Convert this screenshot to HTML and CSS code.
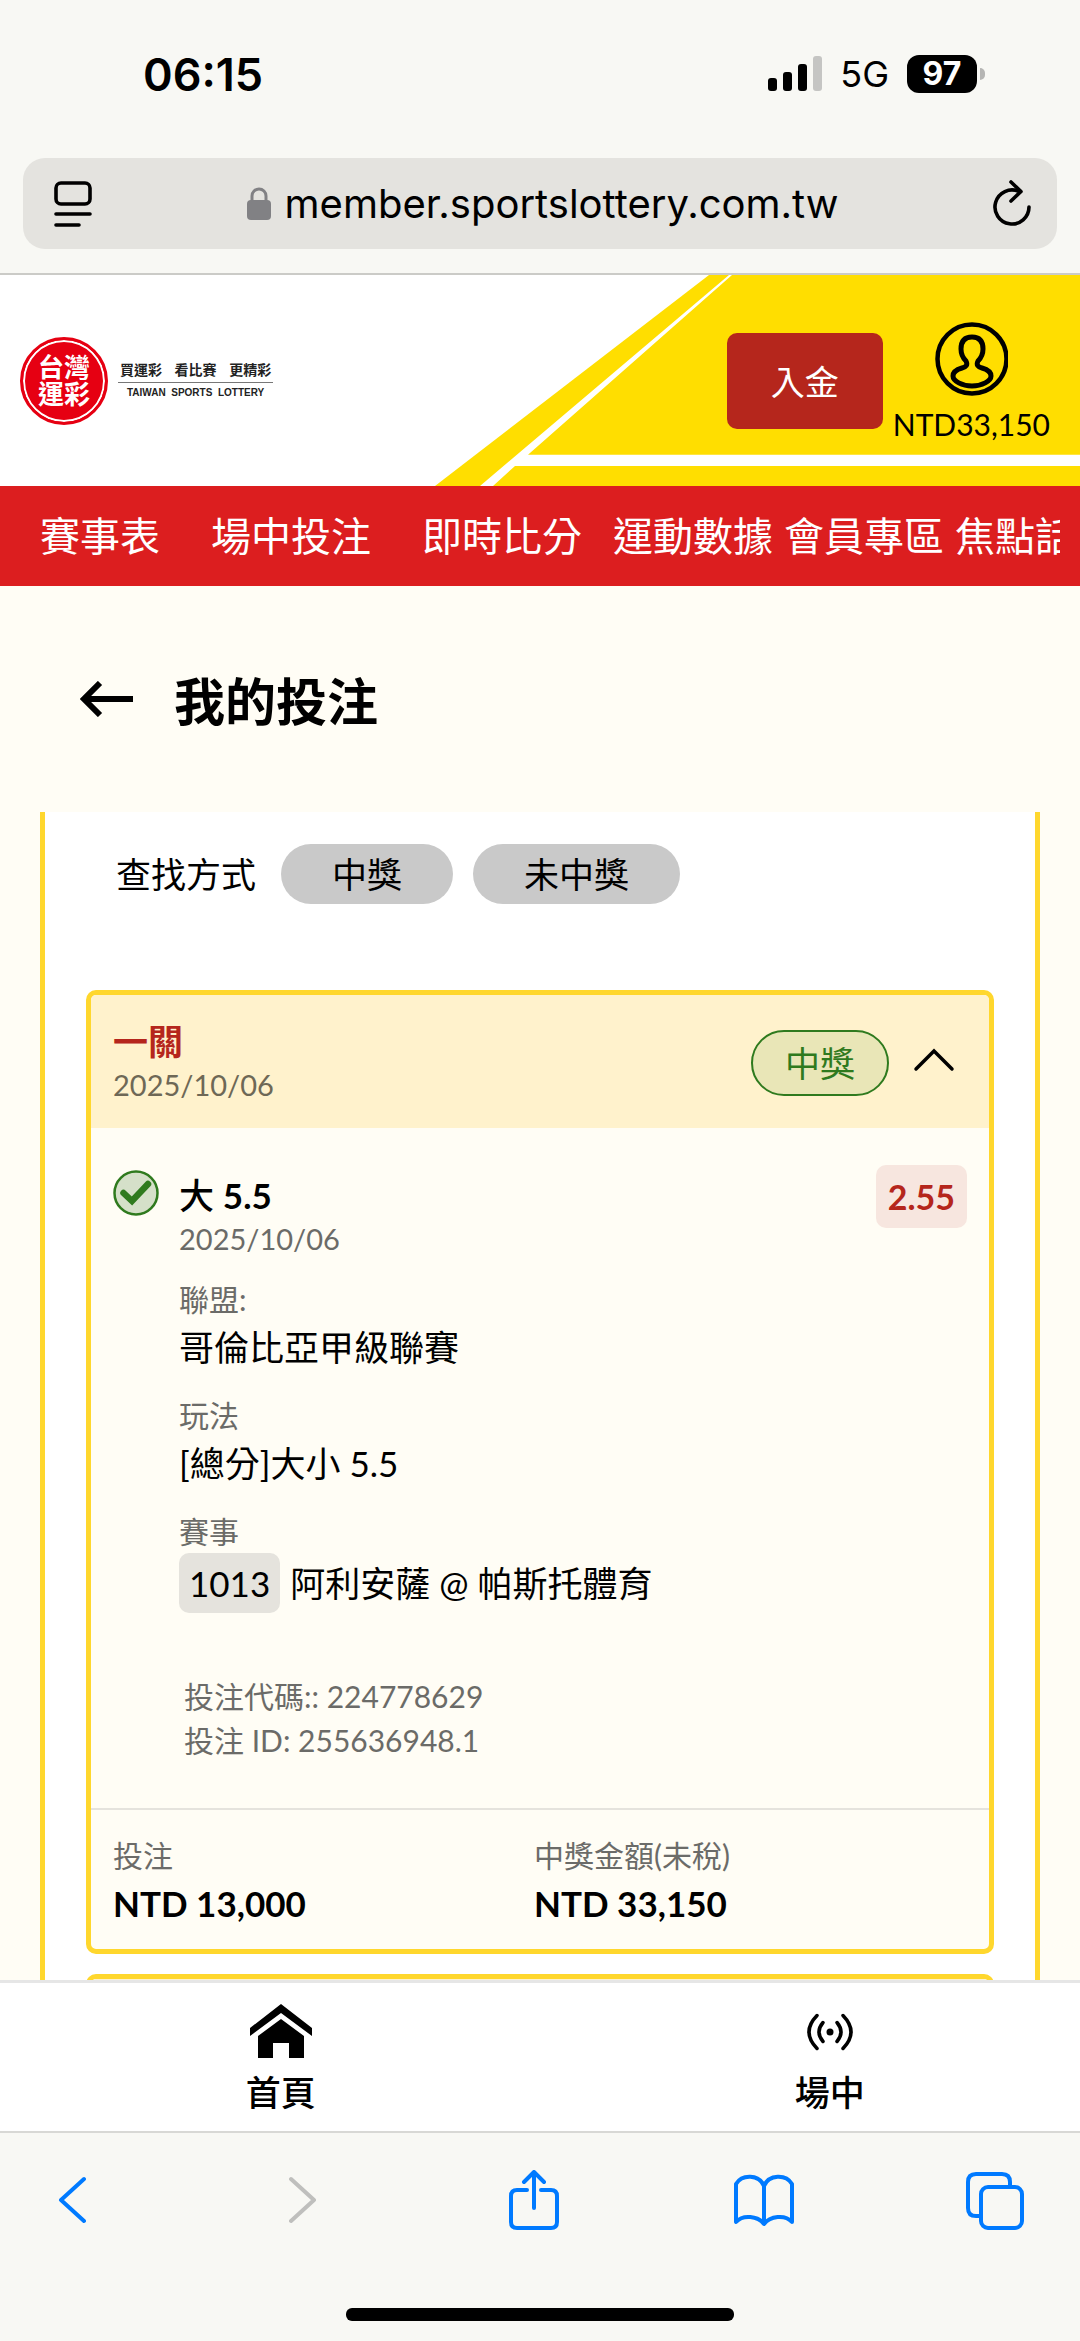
FILE: index.html
```html
<!DOCTYPE html>
<html lang="zh-Hant">
<head>
<meta charset="utf-8">
<meta name="viewport" content="width=device-width, initial-scale=1">
<title>我的投注 - 台灣運彩</title>
<link rel="stylesheet" href="styles.css">
</head>
<body>
<div class="app">
  <div class="browser-top">
    <div class="status">
      <span class="clock">06:15</span>
      <div class="signals">
        <svg width="54" height="36" viewBox="0 0 54 36" aria-hidden="true"><rect x="0" y="22" width="9" height="13" rx="3"/><rect x="15" y="16" width="9" height="19" rx="3"/><rect x="30" y="8" width="9" height="27" rx="3"/><rect x="45" y="0" width="9" height="35" rx="3" fill="#c5c5c3"/></svg>
        <span class="network">5G</span>
        <span class="battery"><span class="level">97</span><span class="nub"></span></span>
      </div>
    </div>
    <div class="url-bar">
      <button class="icon-button" type="button" aria-label="頁面選單"><svg width="38" height="46" viewBox="0 0 38 46" fill="none" stroke="#000" stroke-width="3.600" stroke-linecap="round"><rect x="2" y="2" width="34" height="21" rx="5"/><path d="M2 33H36M2 44H25"/></svg></button>
      <div class="address">
        <svg width="24" height="34" viewBox="0 0 24 34" aria-hidden="true"><rect x="0" y="13" width="24" height="20" rx="4" fill="#818184"/><path d="M5 14V9a7 7 0 0 1 14 0v5" fill="none" stroke="#818184" stroke-width="3"/></svg>
        <span>member.sportslottery.com.tw</span>
      </div>
      <button class="icon-button" type="button" aria-label="重新載入"><svg width="38" height="48" viewBox="0 0 38 48" fill="none" stroke="#000" stroke-width="3.600" stroke-linecap="round" stroke-linejoin="round"><path d="M26 11.500A17 17 0 1 0 36 27"/><path d="M18 2L28 11.500L18 21"/></svg></button>
    </div>
  </div>

  <header class="site-header">
    <svg class="swoosh" viewBox="0 0 648 210" preserveAspectRatio="none" aria-hidden="true"><path fill="#ffde00" d="M277 0H648V210H3Z"/><path fill="#fff" d="M297 0H300L96 179H648V190H83L61 210H48Z"/></svg>
    <a class="logo" href="#">
      <span class="seal">台灣<br>運彩</span>
      <span class="slogan"><span class="slogan-zh"><span>買運彩</span><span>看比賽</span><span>更精彩</span></span><span class="slogan-en">TAIWAN&nbsp; SPORTS&nbsp; LOTTERY</span></span>
    </a>
    <div class="account">
      <button class="deposit" type="button">入金</button>
      <a class="profile" href="#">
        <svg width="74" height="76" viewBox="0 0 74 76" fill="none" stroke="#000" aria-hidden="true"><circle cx="38" cy="37" r="34.500" stroke-width="4.500"/><path stroke-width="5" stroke-linejoin="round" d="M38 15C30 15 27 20 27 27C27 34 30 37 32 39C34 43 32 45 28 46C21 48 19 51 19 54C19 59 28 64 38 64C48 64 57 59 57 54C57 51 55 48 48 46C44 45 42 43 44 39C46 37 49 34 49 27C49 20 46 15 38 15Z"/></svg>
        <span>NTD33,150</span>
      </a>
    </div>
  </header>

  <nav class="site-nav">
    <ul>
      <li class="roomy"><a href="#">賽事表</a></li>
      <li class="roomy"><a href="#">場中投注</a></li>
      <li class="roomy"><a href="#">即時比分</a></li>
      <li><a href="#">運動數據</a></li>
      <li><a href="#">會員專區</a></li>
      <li><a href="#">焦點話題</a></li>
    </ul>
  </nav>

  <main>
    <div class="page-title">
      <button class="icon-button" type="button" aria-label="返回"><svg width="54" height="36" viewBox="0 0 54 36" fill="none" stroke="#000" stroke-width="6"><path d="M53 18H5M20 2L4 18L20 34"/></svg></button>
      <h1>我的投注</h1>
    </div>
    <div class="panel">
      <div class="filters">
        <span class="filters-label">查找方式</span>
        <button type="button">中獎</button>
        <button type="button">未中獎</button>
      </div>
      <article class="ticket">
        <header class="ticket-head">
          <div><h2>一關</h2><p class="date">2025/10/06</p></div>
          <div class="ticket-state">
            <span class="won">中獎</span>
            <button class="icon-button" type="button" aria-label="收合"><svg width="42" height="30" viewBox="0 0 42 30" fill="none" stroke="#000" stroke-width="3.500" stroke-linecap="round"><path d="M3 21L21 3L39 21"/></svg></button>
          </div>
        </header>
        <div class="ticket-body">
          <svg class="check" width="46" height="46" viewBox="0 0 46 46" aria-hidden="true"><circle cx="23" cy="23" r="21.500" fill="#d5e0c9" stroke="#2f7a1e" stroke-width="2.500"/><path d="M10.500 23L19 31L35 14" fill="none" stroke="#2f7a1e" stroke-width="6.500" stroke-linecap="round"/></svg>
          <div class="selection">
            <h3>大 <span class="line">5.5</span></h3>
            <p class="date">2025/10/06</p>
            <dl>
              <div><dt>聯盟:</dt><dd>哥倫比亞甲級聯賽</dd></div>
              <div><dt>玩法</dt><dd>[總分]大小 5.5</dd></div>
              <div><dt>賽事</dt><dd class="match"><span class="code">1013</span><span>阿利安薩 @ 帕斯托體育</span></dd></div>
            </dl>
            <div class="refs"><p>投注代碼:: 224778629</p><p>投注 ID: 255636948.1</p></div>
          </div>
          <span class="odds">2.55</span>
        </div>
        <dl class="ticket-foot">
          <div><dt>投注</dt><dd>NTD 13,000</dd></div>
          <div><dt>中獎金額(未稅)</dt><dd>NTD 33,150</dd></div>
        </dl>
      </article>
      <article class="ticket">
        <header class="ticket-head"></header>
      </article>
    </div>
  </main>

  <nav class="tab-bar">
    <a href="#"><svg width="62" height="54" viewBox="0 0 62 54" aria-hidden="true"><path d="M31 0L62 24V32L31 9L0 32V24Z"/><path d="M31 15L54 32V54H39V39H23V54H8V32Z"/></svg><span>首頁</span></a>
    <a href="#"><svg width="46" height="54" viewBox="0 0 46 54" fill="none" stroke="#000" stroke-width="3.500" stroke-linecap="round" aria-hidden="true"><circle cx="23" cy="28" r="3.500" fill="#000" stroke="none"/><path d="M16 18.500Q8 28 16 37.500M30 18.500Q38 28 30 37.500M10 11.500Q-6 28 10 44.500M36 11.500Q52 28 36 44.500"/></svg><span>場中</span></a>
  </nav>

  <div class="browser-bottom">
    <div class="toolbar">
      <button class="icon-button" type="button" aria-label="上一頁"><svg width="28" height="60" viewBox="0 0 28 60"><path d="M26 9L3 30L26 51"/></svg></button>
      <button class="icon-button" type="button" aria-label="下一頁" disabled><svg width="28" height="60" viewBox="0 0 28 60"><path d="M2 9L25 30L2 51"/></svg></button>
      <button class="icon-button" type="button" aria-label="分享"><svg width="50" height="60" viewBox="0 0 50 60"><path d="M18 20H8Q2 20 2 26V52Q2 58 8 58H42Q48 58 48 52V26Q48 20 42 20H32M25 38V3M15 12L25 2L35 12"/></svg></button>
      <button class="icon-button" type="button" aria-label="書籤"><svg width="60" height="60" viewBox="0 0 60 60"><path d="M30 16V54C24 46 9 44 2 52V14C8 4 25 4 30 16C35 4 52 4 58 14V52C51 44 36 46 30 54"/></svg></button>
      <button class="icon-button" type="button" aria-label="分頁"><svg width="58" height="60" viewBox="0 0 58 60"><path d="M14 46H10Q2 46 2 38V12Q2 4 10 4H36Q44 4 44 12V16"/><rect x="15" y="17" width="41" height="41" rx="7"/></svg></button>
    </div>
    <div class="home-indicator"></div>
  </div>
</div>
</body>
</html>
```
FILE: styles.css
```css
* {
  box-sizing: border-box;
}

body,
h1,
h2,
h3,
p,
ul,
dl,
dd {
  margin: 0;
  padding: 0;
}

body {
  font-family: Lato, "Noto Sans CJK TC", sans-serif;
  color: #000;
}

a {
  color: inherit;
  text-decoration: none;
}

button {
  font: inherit;
  color: inherit;
  border: 0;
  padding: 0;
}

svg {
  display: block;
  flex: none;
}

.icon-button {
  background: none;
}

.app {
  display: flex;
  flex-direction: column;
  height: 100vh;
  background: #fffdf5;
}

.browser-top,
.browser-bottom {
  flex: none;
  background: #f8f8f4;
  font-family: Inter, "Noto Sans CJK TC", sans-serif;
}

.browser-top {
  padding: 44px 23px 24px;
  border-bottom: 2px solid #cbcbc7;
}

.status {
  display: flex;
  justify-content: space-between;
  align-items: center;
  height: 60px;
  padding: 0 72px 0 120px;
  margin-bottom: 54px;
}

.clock {
  font-size: 45px;
  font-weight: 600;
}

.signals {
  display: flex;
  align-items: center;
  gap: 18px;
}

.network {
  font-size: 36px;
}

.battery {
  display: flex;
  align-items: center;
  gap: 3px;
}

.level {
  width: 70px;
  border-radius: 12px;
  background: #000;
  color: #fff;
  font-size: 32px;
  font-weight: 700;
  line-height: 38px;
  text-align: center;
}

.nub {
  width: 5px;
  height: 12px;
  border-radius: 0 5px 5px 0;
  background: #b5b5b3;
}

.url-bar {
  display: flex;
  justify-content: space-between;
  align-items: center;
  height: 91px;
  padding: 0 26px 0 31px;
  border-radius: 22px;
  background: #e4e3df;
}

.address {
  display: flex;
  align-items: center;
  gap: 14px;
  font-size: 40px;
}

.site-header {
  position: relative;
  display: flex;
  flex: none;
  justify-content: space-between;
  align-items: center;
  height: 211px;
  padding: 0 30px 0 20px;
  background: #fff;
}

.swoosh {
  position: absolute;
  top: 0;
  right: 0;
  width: 60%;
  height: 100%;
}

.logo,
.account {
  position: relative;
  display: flex;
  align-items: center;
}

.logo {
  gap: 10px;
}

.seal {
  width: 88px;
  height: 88px;
  padding: 14px 0;
  border: 3px solid #e60012;
  border-radius: 50%;
  background: #e60012;
  box-shadow: inset 0 0 0 2px #fff;
  color: #fff;
  font-size: 26px;
  font-weight: 700;
  line-height: 27px;
  text-align: center;
}

.slogan {
  display: flex;
  flex-direction: column;
  color: #222;
}

.slogan-zh {
  display: flex;
  justify-content: space-between;
  padding: 0 2px;
  border-bottom: 1px solid #777;
  font-size: 14px;
  font-weight: 700;
  line-height: 24px;
}

.slogan-en {
  padding: 0 9px;
  font-family: "Liberation Sans", sans-serif;
  font-size: 10px;
  font-weight: 700;
  line-height: 20px;
  white-space: nowrap;
}

.account {
  gap: 10px;
}

.deposit {
  width: 156px;
  height: 96px;
  border-radius: 10px;
  background: #b5261c;
  color: #fff;
  font-size: 34px;
}

.profile {
  display: flex;
  flex-direction: column;
  align-items: center;
  padding-top: 10px;
  font-size: 30px;
  line-height: 52px;
}

.site-nav {
  flex: none;
  padding: 0 20px;
  background: #dc1e1f;
  color: #fff;
  font-size: 40px;
  line-height: 100px;
}

.site-nav ul {
  display: flex;
  gap: 11px;
  overflow: hidden;
  list-style: none;
  white-space: nowrap;
}

.roomy {
  padding: 0 20px;
}

main {
  flex: 1;
  min-height: 0;
  overflow: hidden;
}

.page-title {
  display: flex;
  align-items: center;
  gap: 40px;
  height: 226px;
  padding: 0 80px;
}

.page-title h1 {
  font-size: 51px;
  font-weight: 700;
}

.panel {
  display: flex;
  flex-direction: column;
  gap: 20px;
  margin: 0 40px;
  padding: 32px 41px;
  border: solid #ffd72d;
  border-width: 0 5px;
  background: #fff;
}

.filters {
  display: flex;
  align-items: center;
  gap: 20px;
  margin-bottom: 66px;
  padding-left: 30px;
  font-size: 35px;
  line-height: 60px;
}

.filters-label {
  margin-right: 5px;
}

.filters button {
  height: 60px;
  padding: 0 51px;
  border-radius: 30px;
  background: #c9c9c9;
}

.ticket {
  overflow: hidden;
  border: 5px solid #ffd72d;
  border-radius: 10px;
  background: #fffdf5;
}

.ticket-head {
  display: flex;
  justify-content: space-between;
  height: 133px;
  padding: 24px 34px 22px 22px;
  background: #fff2cc;
}

.ticket h2,
.ticket h3 {
  font-size: 35px;
  line-height: 44px;
}

.ticket h2 {
  color: #b5261c;
  font-weight: 700;
}

.ticket h3 {
  font-weight: 500;
}

.line {
  font-weight: 700;
}

.date,
.refs,
.ticket dt {
  color: #6b6b68;
  font-size: 30px;
  line-height: 44px;
}

.date {
  font-size: 29px;
}

.ticket-head .date {
  color: #6e6856;
}

.ticket-state {
  display: flex;
  align-items: center;
  gap: 24px;
}

.won {
  width: 138px;
  border: 2px solid #2f7a1e;
  border-radius: 33px;
  background: #e9e6b7;
  color: #2f7a1e;
  font-size: 35px;
  line-height: 62px;
  text-align: center;
}

.ticket-body {
  display: flex;
  align-items: flex-start;
  padding: 37px 22px 46px;
}

.check {
  margin: 5px 20px 0 0;
}

.selection {
  flex: 1;
  padding-top: 8px;
}

.selection dl {
  display: flex;
  flex-direction: column;
  gap: 20px;
  margin: 16px 0 61px;
}

.ticket dd {
  font-size: 35px;
  line-height: 52px;
}

.ticket .match {
  display: flex;
  gap: 10px;
  line-height: 60px;
}

.code {
  padding: 0 10px;
  border-radius: 10px;
  background: #e5e3dd;
}

.refs {
  padding-left: 5px;
}

.odds {
  padding: 0 12px;
  border-radius: 10px;
  background: #f7e6df;
  color: #b5261c;
  font-size: 34px;
  font-weight: 700;
  line-height: 63px;
}

.ticket-foot {
  display: grid;
  grid-template-columns: 1fr 1fr;
  padding: 23px 34px 20px 22px;
  border-top: 2px solid #e5e3dd;
}

.ticket-foot dd {
  font-weight: 700;
}

.tab-bar {
  display: grid;
  flex: none;
  grid-template-columns: 52% 48%;
  padding: 21px 0 13px;
  border-top: 3px solid #e6e6e6;
  background: #fff;
}

.tab-bar a {
  display: flex;
  flex-direction: column;
  align-items: center;
  gap: 8px;
  font-size: 35px;
  font-weight: 500;
  line-height: 52px;
}

.tab-bar a:last-child {
  padding-left: 18px;
}

.browser-bottom {
  border-top: 2px solid #d8d8d5;
  padding: 37px 0 20px;
}

.toolbar {
  display: flex;
  justify-content: space-between;
  align-items: center;
  padding: 0 55px 0 42px;
}

.toolbar button {
  display: flex;
  justify-content: center;
  width: 60px;
}

.toolbar svg {
  fill: none;
  stroke: #007aff;
  stroke-width: 4;
  stroke-linecap: round;
  stroke-linejoin: round;
}

.toolbar button:disabled svg {
  stroke: #bfbfbd;
}

.home-indicator {
  width: 36%;
  height: 13px;
  margin: 78px auto 0;
  border-radius: 6px;
  background: #000;
}
```
